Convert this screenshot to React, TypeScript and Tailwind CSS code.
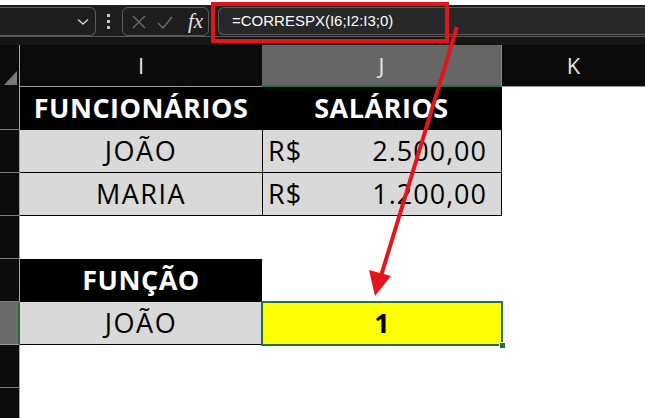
import React from 'react'

const cellFont = { fontFamily: '"Open Sans", "Noto Sans", sans-serif' }

type Row = {
  n: number
  selected?: boolean
  i?: React.ReactNode
  iClass?: string
  j?: React.ReactNode
  jClass?: string
}

function RowHeader({ selected }: { selected?: boolean }) {
  return (
    <div
      className={
        'h-full w-[20px] shrink-0 border-b ' +
        (selected
          ? 'bg-[#6b6b6b] border-b-[#9a9a9a] border-r-2 border-r-[#217346]'
          : 'bg-[#0c0c0c] border-b-[#7b7b7b] border-r border-r-[#a3a3a3]')
      }
    />
  )
}

function Money({ value }: { value: string }) {
  return (
    <div className="flex h-full w-full items-center justify-between pl-[5px] pr-[14px] tracking-[1px]">
      <span>R$</span>
      <span>{value}</span>
    </div>
  )
}

const rows: Row[] = [
  {
    n: 2,
    i: 'FUNCIONÁRIOS',
    iClass: 'bg-black text-white font-bold text-[27px] tracking-[0.5px]',
    j: 'SALÁRIOS',
    jClass: 'bg-black text-white font-bold text-[27px] tracking-[0.5px] border-r border-black',
  },
  {
    n: 3,
    i: 'JOÃO',
    iClass: 'bg-[#d9d9d9] text-black text-[27px] tracking-[1.5px] border-b border-black',
    j: <Money value="2.500,00" />,
    jClass: 'bg-[#d9d9d9] text-black text-[27px] border-b border-l border-r border-black',
  },
  {
    n: 4,
    i: 'MARIA',
    iClass: 'bg-[#d9d9d9] text-black text-[27px] tracking-[1.5px] border-b border-black',
    j: <Money value="1.200,00" />,
    jClass: 'bg-[#d9d9d9] text-black text-[27px] border-b border-l border-r border-black',
  },
  { n: 5 },
  {
    n: 6,
    i: 'FUNÇÃO',
    iClass: 'bg-black text-white font-bold text-[27px] tracking-[0.5px]',
  },
  {
    n: 7,
    selected: true,
    i: 'JOÃO',
    iClass: 'bg-[#d9d9d9] text-black text-[27px] tracking-[1.5px] border-b border-black',
  },
  { n: 8 },
  { n: 9 },
]

export default function App() {
  return (
    <div className="relative h-[418px] w-[645px] overflow-hidden bg-white">
      {/* formula bar */}
      <div className="h-[5px] bg-white" />
      <div className="flex h-[31px] items-start bg-[#1e1e1e] pt-[2px]">
        <div className="flex h-[29px] w-[96px] shrink-0 items-center justify-end rounded-r-[6px] border border-l-0 border-[#5c5c5c] pr-[6px]">
          <svg width="12" height="8" viewBox="0 0 12 8" fill="none" stroke="#d0d0d0" strokeWidth="1.4">
            <path d="M1 1.5 L6 6 L11 1.5" />
          </svg>
        </div>
        <div className="ml-[11px] flex h-[29px] w-[3px] flex-col items-center justify-center gap-[3px]">
          <span className="h-[3px] w-[3px] bg-[#c8c8c8]" />
          <span className="h-[3px] w-[3px] bg-[#c8c8c8]" />
          <span className="h-[3px] w-[3px] bg-[#c8c8c8]" />
        </div>
        <div className="ml-[12px] flex h-[29px] w-[87px] shrink-0 items-center gap-[10px] rounded-[6px] border border-[#5c5c5c] pl-[8px]">
          <svg width="16" height="16" viewBox="0 0 16 16" fill="none" stroke="#6e6e6e" strokeWidth="1.3">
            <path d="M2 2 L14 14 M14 2 L2 14" />
          </svg>
          <svg width="16" height="16" viewBox="0 0 16 16" fill="none" stroke="#6e6e6e" strokeWidth="1.3">
            <path d="M1 9 L6 14 L15 3" />
          </svg>
          <span
            className="ml-[5px] text-[21px] italic leading-none text-[#e4e4e4]"
            style={{ fontFamily: '"Liberation Serif", "DejaVu Serif", serif' }}
          >
            fx
          </span>
        </div>
        <div
          className="ml-[9px] flex h-[28px] flex-1 items-center rounded-l-[6px] border border-r-0 border-[#5c5c5c] bg-[#282828] pl-[13px] text-[15px] text-white"
          style={{ fontFamily: '"Liberation Sans", Arial, sans-serif' }}
        >
          =CORRESPX(I6;I2:I3;0)
        </div>
      </div>
      <div className="h-[9px] border-t border-[#5a5a5a] bg-[#181513]" />

      {/* column headers */}
      <div className="flex h-[42px] text-[22px] text-[#e6e6e6]" style={cellFont}>
        <div className="relative h-full w-[20px] shrink-0 border-r border-[#a3a3a3] bg-[#0c0c0c]">
          <svg className="absolute bottom-[2px] right-[2px]" width="13" height="14" viewBox="0 0 13 14">
            <path d="M13 0 L13 14 L0 14 Z" fill="#7a7a7a" />
          </svg>
        </div>
        <div className="flex h-full w-[242px] shrink-0 items-center justify-center border-b border-[#9a9a9a] bg-[#0b0b0b]">
          I
        </div>
        <div className="flex h-full w-[240px] shrink-0 items-center justify-center border-b-2 border-r border-b-[#217346] border-r-[#8a8a8a] bg-[#666666]">
          J
        </div>
        <div className="flex h-full flex-1 items-center justify-center border-b border-[#9a9a9a] bg-[#0b0b0b]">
          K
        </div>
      </div>

      {/* cells */}
      <div style={cellFont}>
        {rows.map((row) => (
          <div key={row.n} className="flex h-[43px]">
            <RowHeader selected={row.selected} />
            <div className={'flex h-full w-[242px] shrink-0 items-center justify-center ' + (row.iClass ?? '')}>
              {row.i}
            </div>
            {row.n === 7 ? (
              <div className="relative flex h-full w-[240px] shrink-0 items-center justify-center bg-[#ffff00] text-[27px] font-bold text-black">
                1
                <div className="absolute inset-[-1px] border-2 border-[#217346]" />
                <div className="absolute bottom-[-4px] right-[-4px] h-[7px] w-[7px] border border-white bg-[#217346]" />
              </div>
            ) : (
              <div className={'flex h-full w-[240px] shrink-0 items-center justify-center ' + (row.jClass ?? '')}>
                {row.j}
              </div>
            )}
            <div className="h-full flex-1" />
          </div>
        ))}
      </div>

      {/* highlight around the formula */}
      <div className="absolute left-[211px] top-[2px] h-[41px] w-[238px] border-[4px] border-[#e3151a]" />

      {/* arrow */}
      <svg className="pointer-events-none absolute left-0 top-0" width="645" height="418" viewBox="0 0 645 418">
        <line x1="457" y1="27" x2="381" y2="276" stroke="#e3151a" strokeWidth="4" />
        <path d="M375 296 L369 270 L391 276 Z" fill="#e3151a" />
      </svg>
    </div>
  )
}
